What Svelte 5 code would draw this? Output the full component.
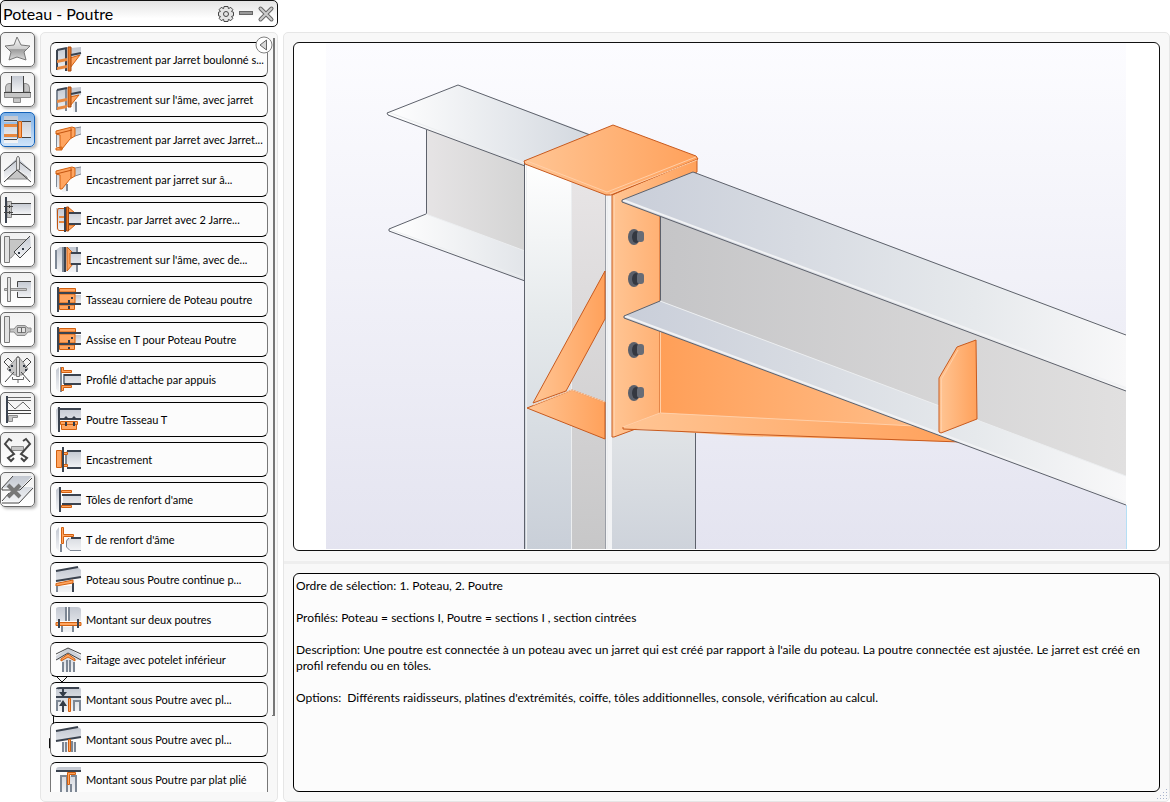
<script lang="ts">
	type Shape = [string, string];

	const categories: { name: string; shapes: Shape[] }[] = [
		{
			name: 'Favoris',
			shapes: [['star', 'M17 5 L21 13 L30 14 L24 20 L26 28 L17 25 L9 28 L11 20 L5 14 L14 13 Z']]
		},
		{
			name: 'Pied de poteau',
			shapes: [
				['grey', 'M5.5 20 V15 Q6 11.5 9 11.5 H11 V20 Z M24 20 V11.5 H26 Q29.5 12 29.5 16 V20 Z'],
				['grey', 'M4.5 20.5 H30.5 V25.5 H4.5 Z M13.5 26 H20.5 V30.5 H13.5 Z'],
				['steel', 'M11 4 H24 V20 H11 Z'],
				['dark1', 'M11.5 4 V20 M23.5 4 V20 M4 20.5 H31']
			]
		},
		{
			name: 'Poteau - Poutre',
			shapes: [
				['steel', 'M4 4 H18 V10 H4 Z M4 15 H18 V22 H4 Z M4 26 H18 V31 H4 Z M22 9 H31 V25 H22 Z'],
				['dark1', 'M4 8.5 H17 M4 27.5 H17 M22 9.5 H31 M22 25.5 H31'],
				['bar-orange', 'M4 12 H18 V15 H4 Z M4 22 H18 V25 H4 Z'],
				['orange', 'M18.5 9.5 H21.5 V25.5 H18.5 Z'],
				['thin', 'M17.5 9 V27']
			]
		},
		{
			name: 'Faîtage',
			shapes: [
				['grey', 'M9 25 L17 18 L27 25 V27 H7 Z'],
				['steel', 'M4 18 L16 7 H19 L31 18 V27 L18 17 L4 27 Z'],
				['dark1', 'M4 19 L17 8 L31 19 M4 30 L17 18 L31 30'],
				['plate', 'M16.5 6 L18 4 L19.500 6 V18 H16.5 Z']
			]
		},
		{
			name: 'Poutre - Poutre',
			shapes: [
				['grey', 'M7 9.5 H11.5 V25.5 H7 Z'],
				['steel', 'M12 11 H31 V22 H12 Z'],
				['dark', 'M6 5 V31'],
				['dark1', 'M11 11.5 H31 M11 22.5 H31 M4 14.5 H13 M4 20.5 H13 M9.5 13 V16 M9.5 19 V22']
			]
		},
		{
			name: 'Contreventement',
			shapes: [
				['grey', 'M9.5 7.5 H27 L11 26 H9.5 Z'],
				['plate', 'M4.5 4.5 H9.5 V30.5 H4.5 Z'],
				['steel', 'M14 20 L30 4 L31 15 L20 26 Z'],
				['dark1', 'M14 20 L30 4 M14 20 L20 26 L31 15'],
				['dot', 'M18 20 h2 v2 h-2 Z M22 16 h2 v2 h-2 Z']
			]
		},
		{
			name: 'Éclissage',
			shapes: [
				['steel', 'M17 9 H31 V26 H17 Z'],
				['dark1', 'M31 9.5 H17.5 V15 M31 25.5 H17.5 V20'],
				['grey', 'M4.5 16.5 H26.5 V18.5 H4.5 Z'],
				['plate', 'M7.5 5.5 H10.5 V29.5 H7.5 Z']
			]
		},
		{
			name: 'Tubes',
			shapes: [
				['plate', 'M4.5 4.5 H9.5 V30.5 H4.5 Z'],
				['grey', 'M10 17 H14 L17 13.5 H25 L28 16 H31 V20 H28 L25 23.5 H17 L14 20 H10 Z'],
				['plate', 'M17.5 15.5 H25.5 V20.5 H17.5 Z'],
				['thin', 'M21.5 16 V21']
			]
		},
		{
			name: 'Gousset',
			shapes: [
				['grey', 'M14 9 L18 4 L22 9 L28 17 L22 23 H14 L7 17 Z'],
				['dark1', 'M4 10 L8 6 L12 10 M31 10 L27 6 L23 10 M14 20 L5 30 M21 20 L30 30 M4 10 L10 16 M31 10 L25 16'],
				['plate', 'M16.5 5.5 H19.5 V24.5 H16.5 Z'],
				['dot', 'M11 13 h2 v2 h-2 Z M23 13 h2 v2 h-2 Z M9 17 h2 v2 h-2 Z M25 17 h2 v2 h-2 Z'],
				['thin', 'M12.5 25 V27.5 H23.5 V25 M18 27 V31']
			]
		},
		{
			name: 'Treillis',
			shapes: [
				['thin', 'M8 5.5 H31 M8 8.5 H31'],
				['thin', 'M8 10 L15 17 L23 10 L30 17'],
				['dark', 'M7 4 V31'],
				['dark1', 'M8 18.5 H31 M8 21.5 H31'],
				['grey', 'M8.5 23.5 H17.5 V25.5 H12.5 V29.5 H8.5 Z']
			]
		},
		{
			name: 'Pannes',
			shapes: [
				['grey', 'M11.5 14.5 H23.5 V18.5 H11.5 Z'],
				['bold', 'M12 9 L9 7 L5 12 L14 22 L8 26 L11 29 L14 26 M23 9 L26 7 L30 12 L21 22 L27 26 L24 29 L21 26']
			]
		},
		{
			name: 'Divers',
			shapes: [
				['steel', 'M2 16 L13 4 H32 L21 16 Z M2 29 L15 15 H33 L20 30 Z'],
				['dark1', 'M2 16 L13 4 M2 16 V18 H20 L32 6 M2 31 H19 L33 16 M2 29 L9 21'],
				['cross', 'M8 13 L20 25 M20 13 L8 25']
			]
		}
	];

	const connections: { label: string; shapes: Shape[] }[] = [
		{
			label: 'Encastrement par Jarret boulonné s...',
			shapes: [
				['steel', 'M2 4 L12 2 V23 L2 25 Z M16 2 L26 1 V9 L16 11 Z'],
				['dark', 'M2 4 V24 M11 3 V25 M2 4 L12 2'],
				['bar-orange', 'M2 14 L12 12 V15 L2 17 Z M2 21 L12 19 V22 L2 24 Z'],
				['orange', 'M15 12 L25 9 L15 22 Z'],
				['deep', 'M13 1 H16 V25 H13 Z'],
				['dark', 'M16 9 L26 7']
			]
		},
		{
			label: "Encastrement sur l'âme, avec jarret",
			shapes: [
				['steel', 'M2 4 L12 2 V23 L2 25 Z M16 2 L26 1 V9 L16 11 Z M18 15 H22 V26 H18 Z'],
				['line', 'M2 4 V24 M11 2 V25 M21 16 V26'],
				['bar-orange', 'M2 14 L12 12 V15 L2 17 Z M2 21 L12 19 V22 L2 24 Z'],
				['orange', 'M15 11 L24 9 L15 20 Z'],
				['deep', 'M13 1 H16 V21 H13 Z'],
				['dark', 'M2 4 L12 2 M16 8 L26 6']
			]
		},
		{
			label: 'Encastrement par Jarret avec Jarret...',
			shapes: [
				['steel', 'M19 3 L26 1 V8 L19 11 Z M1 8 H5 V23 H1 Z'],
				['orange', 'M1 5 L17 1 L20 2 V10 L15 13 L7 23 H5 V9 L1 8 Z M1 22 L7 21 V24 H1 Z'],
				['rust', 'M1 8 L17 4 M16 2 V12'],
				['line1', 'M20 2 L26 1 M20 10 L26 8 M1.5 9 V21']
			]
		},
		{
			label: 'Encastrement par jarret sur â...',
			shapes: [
				['steel', 'M19 3 L26 1 V8 L19 11 Z M1 8 H5 V23 H1 Z M7 18 H13 V26 H7 Z'],
				['orange', 'M1 5 L17 1 L20 2 V10 L15 13 L7 23 H5 V9 L1 8 Z'],
				['rust', 'M1 8 L17 4 M16 2 V12'],
				['line1', 'M20 2 L26 1 M20 10 L26 8 M1.5 9 V21'],
				['line', 'M12 18 V25']
			]
		},
		{
			label: 'Encastr. par Jarret avec 2 Jarre...',
			shapes: [
				['steel', 'M1 2 H9 V24 H1 Z M13 8 H26 V18 H13 Z'],
				['rust', 'M9 2.5 H4 Q2.5 2 2.5 5 V22 Q2.5 24 4 24.5 H9'],
				['bar-orange', 'M4 10 H9 V12 H4 Z M4 15 H9 V17 H4 Z'],
				['orange', 'M13 1 L20 7 H13 Z M13 19 H20 L13 25 Z'],
				['dark', 'M10 1 V26 M14 7 H26 M14 18 H26'],
				['deep', 'M11.5 1 H13.5 V25 H11.5 Z']
			]
		},
		{
			label: "Encastrement sur l'âme, avec de...",
			shapes: [
				['steel', 'M1 4 L5 1 H23 V26 H4 L1 23 Z M15 8 H26 V18 H15 Z'],
				['line', 'M8 1 V26 M1 4 V23 M22 1 V7 M22 19 V26'],
				['orange', 'M12 1 L18 7 H15 V18 H18 L12 25 Z'],
				['dark', 'M10 1 V26 M16 7 H26 M16 18 H26']
			]
		},
		{
			label: 'Tasseau corniere de Poteau poutre',
			shapes: [
				['steel', 'M20 9 H26 V18 H20 Z'],
				['orange', 'M4.5 2.5 H20.5 V6 H4.5 Z M4.5 8 H20 V17 H4.5 Z M4.5 19 H19.5 V23.5 H4.5 Z'],
				['dark', 'M3 1 V26 M3 7 H26 M3 18 H26'],
				['dot', 'M16 11 h2 v2 h-2 Z M13 14 h2 v3 h-2 Z M13 20 h2 v3 h-2 Z']
			]
		},
		{
			label: 'Assise en T pour Poteau Poutre',
			shapes: [
				['steel', 'M20 9 H26 V18 H20 Z'],
				['orange', 'M4.5 2.5 H20.5 V6 H4.5 Z M4.5 8 H20 V17 H4.5 Z M4.5 19 H19.5 V23.5 H4.5 Z'],
				['dark', 'M3 1 V26 M3 7 H26 M3 18 H26'],
				['dot', 'M16 11 h2 v2 h-2 Z M13 14 h2 v3 h-2 Z M13 21 h2 v2 h-2 Z']
			]
		},
		{
			label: "Profilé d'attache par appuis",
			shapes: [
				['steel', 'M1 4 L4 1 V26 L1 23 Z M9 8 H26 V18 H9 Z'],
				['line', 'M6 1 V26 M9 8 V18'],
				['orange', 'M6.5 1.5 H8.5 V4.5 H16.5 V6.5 H6.5 Z M6.5 19.5 H16.5 V21.5 H8.5 V24.5 H6.5 Z'],
				['dark', 'M9 9 H26 M9 18 H26']
			]
		},
		{
			label: 'Poutre Tasseau T',
			shapes: [
				['steel', 'M5 4 H26 V13 H5 Z M1 4 L3 1 V25 L1 23 Z'],
				['dark', 'M4 1 V26 M5 3 H26 M5 13 H26'],
				['orange', 'M5.5 15.5 H22.5 V18.5 H5.5 Z M6.5 18.5 H21.5 V23.5 H6.5 Z'],
				['dot', 'M8 13 L11 10 L14 13 Z M16 13 L19 10 L22 13 Z M10 16 h2 v4 h-2 Z M18 16 h2 v4 h-2 Z']
			]
		},
		{
			label: 'Encastrement',
			shapes: [
				['steel', 'M11 5 H26 V22 H11 Z'],
				['orange', 'M1.5 4.5 H6.5 V21.5 H1.5 Z M8.5 6.5 H12.5 V8.5 H8.5 Z M8.5 18.5 H12.5 V20.5 H8.5 Z'],
				['dark', 'M8 1 V26 M12 5 H26 M12 22 H26'],
				['line', 'M11 9 V18']
			]
		},
		{
			label: "Tôles de renfort d'ame",
			shapes: [
				['steel', 'M1 4 L4 1 V25 L1 23 Z M8 8 H26 V18 H8 Z'],
				['dark', 'M5 1 V26 M7 9 H26 M7 18 H26'],
				['orange', 'M6.5 4.5 H16.5 V6.5 H6.5 Z M6.5 19.5 H16.5 V21.5 H6.5 Z']
			]
		},
		{
			label: "T de renfort d'âme",
			shapes: [
				['steel', 'M1 5 L4 1 V25 L1 22 Z M13 12 H26 V25 H16 L11 20 V14 Z'],
				['line', 'M6 18 V26'],
				['line1', 'M26 24.5 H15 L11.5 21 V15 L14 12'],
				['orange', 'M6.5 1.5 H8.5 V8.5 H18.5 V10.5 H8.5 V17.5 H6.5 Z'],
				['dark', 'M16 12 H26']
			]
		},
		{
			label: 'Poteau sous Poutre continue p...',
			shapes: [
				['steel', 'M1 5 L23 1 L26 4 V12 L1 16 Z M3 20 H17 V26 H3 Z'],
				['dark', 'M1 5 L23 1 M1 15 L26 11 M18 17 V26'],
				['orange', 'M1 17.5 L18 14 V17 L1 20 Z'],
				['line', 'M2 20 V26']
			]
		},
		{
			label: 'Montant sur deux poutres',
			shapes: [
				['steel', 'M1 3 Q1 1 4 1 H11 V15 H1 Z M14 1 H22 Q26 1 26 4 V15 H14 Z M7 21 H18 V26 H7 Z'],
				['line', 'M11 1 V15 M14 1 V15 M7 20 V26 M18 20 V26'],
				['orange', 'M1 16.5 H26 V19.5 H1 Z'],
				['dark', 'M4 13 V22 M23 13 V22']
			]
		},
		{
			label: 'Faitage avec potelet inférieur',
			shapes: [
				['steel', 'M1 10 L13 2 L26 10 V14 H1 Z M7 14 H19 V26 H7 Z'],
				['dark1', 'M1 8 L13 2 L26 8 M1 14 L13 7 L26 14'],
				['orange', 'M6 13 L13 8 L20 13 V15 L13 11 L6 15 Z'],
				['line', 'M8 16 V26 M12 14 V26 M15 14 V26 M19 16 V26']
			]
		},
		{
			label: 'Montant sous Poutre avec pl...',
			shapes: [
				['steel', 'M1 4 Q1 1 4 1 H23 Q26 1 26 4 V25 H1 Z'],
				['dark', 'M1 11 H26 M8 2 V7 M8 18 V26 M2 3 Q2 2 5 2 H24'],
				['dot', 'M4 6 H12 L8 11 Z M4 20 H12 L8 14 Z'],
				['line', 'M2 25 V15 H6 M19 25 V15 H26 M25 14 V25'],
				['orange', 'M13.5 12.5 H15.5 V25.5 H13.5 Z']
			]
		},
		{
			label: 'Montant sous Poutre avec pl...',
			shapes: [
				['steel', 'M1 5 L23 1 L26 3 V11 L1 15 Z M7 16 H20 V26 H7 Z'],
				['dark', 'M1 5 L23 1 M1 15 L26 11'],
				['line', 'M8 16 V26 M11 16 V26 M17 15 V26 M20 16 V26'],
				['orange', 'M13.5 13.5 H15.5 V25.5 H13.5 Z']
			]
		},
		{
			label: 'Montant sous Poutre par plat plié',
			shapes: [
				['steel', 'M1 4 Q1 1 4 1 H26 V5 H1 Z M6 10 H21 V26 H6 Z'],
				['dark', 'M1 5 H26'],
				['line', 'M6 26 V10 H12 M16 10 H21 V26 M12 10 V26 M16 18 V26'],
				['orange', 'M12.5 6.5 H20.5 V8.5 H14.5 V18.5 H12.5 Z']
			]
		}
	];

	const bolts = [237, 279, 350, 393];

	const description = [
		'Ordre de sélection: 1. Poteau, 2. Poutre',
		'Profilés: Poteau = sections I, Poutre = sections I , section cintrées',
		"Description: Une poutre est connectée à un poteau avec un jarret qui est créé par rapport à l'aile du poteau. La poutre connectée est ajustée. Le jarret est créé en profil refendu ou en tôles.",
		"Options:  Différents raidisseurs, platines d'extrémités, coiffe, tôles additionnelles, console, vérification au calcul."
	];

	let activeCategory = $state(2);
	let selected = $state(0);
</script>

{#snippet shapeList(shapes: Shape[])}
	{#each shapes as [kind, d]}
		<path class={kind} {d} />
	{/each}
{/snippet}

<svg class="defs" width="0" height="0" aria-hidden="true">
	<defs>
		<linearGradient id="steel" x1="0" y1="0" x2="0" y2="1">
			<stop offset="0" stop-color="#c3c8d1" />
			<stop offset="1" stop-color="#f3f4f6" />
		</linearGradient>
		<linearGradient id="metal" x1="0" y1="0" x2="0" y2="1">
			<stop offset="0" stop-color="#fafafa" />
			<stop offset="0.5" stop-color="#cfcfcf" />
			<stop offset="0.55" stop-color="#9c9c9c" />
			<stop offset="1" stop-color="#dcdcdc" />
		</linearGradient>
	</defs>
</svg>

<div class="window">
	<div class="left">
		<header class="titlebar">
			<h1>Poteau - Poutre</h1>
			<button aria-label="Paramètres">
				<svg width="18" height="18" viewBox="0 0 18 18">
					<path
						class="gear"
						d="M7 1.5 H11 L11.4 3.6 L13.8 2.4 L15.8 4.6 L14.6 6.6 L16.5 7.2 V10.8 L14.6 11.4 L15.8 13.4 L13.8 15.6 L11.4 14.4 L11 16.5 H7 L6.6 14.4 L4.2 15.6 L2.2 13.4 L3.4 11.4 L1.5 10.8 V7.2 L3.4 6.6 L2.2 4.6 L4.2 2.4 L6.6 3.6 Z"
					/>
					<circle class="gear" cx="9" cy="9" r="2.5" />
				</svg>
			</button>
			<button aria-label="Réduire">
				<svg width="18" height="18" viewBox="0 0 18 18">
					<rect class="bar" x="2.5" y="6.5" width="13" height="3" />
				</svg>
			</button>
			<button aria-label="Fermer">
				<svg width="18" height="18" viewBox="0 0 18 18">
					<path class="x-out" d="M3.5 3.5 L14.5 14.5 M14.5 3.5 L3.5 14.5" />
					<path class="x-in" d="M3.5 3.5 L14.5 14.5 M14.5 3.5 L3.5 14.5" />
				</svg>
			</button>
		</header>

		<div class="browser">
			<nav class="categories">
				{#each categories as category, i}
					<button
						class="category"
						class:active={i === activeCategory}
						aria-label={category.name}
						onclick={() => (activeCategory = i)}
					>
						<svg width="35" height="35" viewBox="0 0 35 35">
							{@render shapeList(category.shapes)}
						</svg>
					</button>
				{/each}
			</nav>

			<section class="panel list">
				<svg class="pointer" width="22" height="76" viewBox="0 0 22 76">
					<path d="M8 3 L14 9 L20 3 M5.5 42 V51 M5 65.5 H1.5 V75 H5" />
				</svg>
				<div class="rows">
					{#each connections as connection, i}
						<button class="row" onclick={() => (selected = i)}>
							<svg width="27" height="27" viewBox="0 0 27 27">
								{@render shapeList(connection.shapes)}
							</svg>
							<span>{connection.label}</span>
						</button>
					{/each}
				</div>
				<button class="collapse" aria-label="Replier">
					<svg width="18" height="18" viewBox="0 0 18 18">
						<circle cx="9" cy="9" r="8" />
						<path d="M11.5 4 V14 L5 9 Z" />
					</svg>
				</button>
				<div class="rail"></div>
			</section>
		</div>
	</div>

	<main class="panel detail">
		<div class="preview">
			<svg viewBox="294 43 865 507" role="img" aria-label="Encastrement par jarret boulonné">
				<defs>
					<linearGradient id="sky" x1="0" y1="0" x2="0" y2="1">
						<stop offset="0" stop-color="#fcfcff" />
						<stop offset="1" stop-color="#e4e4f0" />
					</linearGradient>
					<linearGradient id="flangeLeft">
						<stop offset="0" stop-color="#ffffff" />
						<stop offset="1" stop-color="#d3d8df" />
					</linearGradient>
					<linearGradient id="footLeft">
						<stop offset="0" stop-color="#ffffff" />
						<stop offset="1" stop-color="#e2e5e9" />
					</linearGradient>
					<linearGradient id="webLeft">
						<stop offset="0" stop-color="#e6e4e5" />
						<stop offset="1" stop-color="#d4d4d4" />
					</linearGradient>
					<linearGradient id="flangeRight">
						<stop offset="0" stop-color="#c9ced9" />
						<stop offset="0.35" stop-color="#d7dbe2" />
						<stop offset="0.7" stop-color="#e6e9ec" />
						<stop offset="1" stop-color="#f8f8f9" />
					</linearGradient>
					<linearGradient id="webRight">
						<stop offset="0" stop-color="#c5c5c7" />
						<stop offset="1" stop-color="#e1e0e0" />
					</linearGradient>
					<linearGradient id="column" x1="0" y1="0" x2="0" y2="1">
						<stop offset="0" stop-color="#ffffff" />
						<stop offset="0.4" stop-color="#e6eaec" />
						<stop offset="1" stop-color="#c9cfd8" />
					</linearGradient>
					<linearGradient id="columnWeb" x1="0" y1="0" x2="0" y2="1">
						<stop offset="0" stop-color="#e8e5e6" />
						<stop offset="1" stop-color="#c7c7c8" />
					</linearGradient>
					<linearGradient id="columnFace" x1="0" y1="0" x2="0" y2="1">
						<stop offset="0" stop-color="#e0e3e6" />
						<stop offset="1" stop-color="#ced3db" />
					</linearGradient>
					<linearGradient id="warm">
						<stop offset="0" stop-color="#ffc594" />
						<stop offset="1" stop-color="#ffa15b" />
					</linearGradient>
					<linearGradient id="warmBack">
						<stop offset="0" stop-color="#ff9f58" />
						<stop offset="1" stop-color="#ffc290" />
					</linearGradient>
				</defs>

				<rect x="326" y="43" width="800" height="506" fill="url(#sky)" />
				<path d="M1126.5 505 V549" stroke="#b5dff5" />

				<!-- beam behind the column -->
				<path d="M426 128 L525 164 V253 L426 214 Z" fill="url(#webLeft)" />
				<path class="edge" d="M426.5 130 V214" />
				<path d="M389 229 L426 214 L525 251 V281 L389 231 Z" fill="url(#footLeft)" />
				<path class="soft" d="M426 214 L525 251 M389 229 L525 278" />
				<path class="edge" d="M426 214 L389 229 V231 L525 281" />
				<path d="M387 113 L458 85 L590 134 L525 166 L388 115 Z" fill="url(#flangeLeft)" />
				<path class="soft" d="M388 112 L525 163" />
				<path class="edge" d="M590 135 L458 85 L387 113 L388 115 L525 166" />

				<!-- column -->
				<rect x="611" y="430" width="85" height="119" fill="url(#columnFace)" />
				<rect x="525" y="160" width="47" height="389" fill="url(#column)" />
				<rect x="571" y="175" width="35" height="374" fill="url(#columnWeb)" />
				<rect x="606" y="190" width="6" height="359" fill="#f2f3f5" />
				<path class="seam" d="M605.5 192 V549" />
				<path class="soft" d="M526.5 163 V549 M607.5 195 V549 M571.5 178 V549" />
				<path class="edge" d="M524.5 162 V549 M695.5 430 V549" />

				<g class="hot">
					<path d="M605 271 V319 L566 391 L533 403 Z" fill="url(#warm)" />
					<path d="M527 408 L572 390 L605 402 V439 Z" fill="url(#warm)" />
					<path class="glow" d="M533 405 L572 390 L605 402" />

					<!-- end plate and cap -->
					<path d="M612 195 L697 159 V172 L660 190 V418 L633 430 L614 437 L612 437 Z" fill="url(#warm)" />
					<path class="glow" d="M614.5 196 V436" />
					<path d="M524 161 L613 125 L696 156 L698 159 L611 195 L606 195 L525 164 Z" fill="url(#warm)" />
					<path class="glow" d="M527 161 L607 192 L696 157 M610 194 L697 160" />
				</g>

				<!-- haunch -->
				<path d="M660 329 L960 442 L915 427 L660 413 Z" fill="url(#warmBack)" />
				<path d="M623 428 L660 413 L915 426 L960 442 L740 436 Z" fill="url(#warm)" />
				<g class="hot">
					<path class="glow" d="M660.5 332 V413 L915 426 M623 427 L660 413" />
					<path d="M960 442 L740 434 L623 429 V427" />
				</g>

				{#each bolts as y}
					<ellipse cx="634" cy={y} rx="6" ry="8" fill="#5b606b" />
					<ellipse cx="636" cy={y} rx="4" ry="6" fill="#343841" />
					<rect x="637" y={y - 6} width="7" height="11" rx="3" fill="#676c76" />
				{/each}

				<!-- connected beam -->
				<path d="M660 214 L1126 390 V477 L660 301 Z" fill="url(#webRight)" />
				<path class="edge" d="M660.5 215 V301" />
				<path d="M624 316 L660 301 L1126 476 V505 L624 318 Z" fill="url(#flangeRight)" />
				<path class="soft" d="M660 301 L1126 476" />
				<path class="lip" d="M625 316 L1126 503" />
				<path class="edge" d="M660 301 L624 316 V318 L1126 505" />
				<path d="M622 200 L693 172 L1126 334 V391 L622 202 Z" fill="url(#flangeRight)" />
				<path class="lip" d="M623 200 L1126 388" />
				<path class="edge" d="M1126 335 L693 172 L622 200 V202 L1126 391" />

				<g class="hot">
					<path d="M939 378 L957 347 L976 340 L977 419 L941 433 L939 432 Z" fill="url(#warm)" />
					<path class="glow" d="M941.5 431 V379 L958 350" />
				</g>
			</svg>
		</div>

		<div class="notes">
			{#each description as line}
				<p>{line}</p>
			{/each}
		</div>

		<svg class="grip" width="12" height="12" viewBox="0 0 12 12" aria-hidden="true">
			<path d="M10 1h1v1h-1z M7 4h1v1h-1z M10 4h1v1h-1z M4 7h1v1h-1z M7 7h1v1h-1z M10 7h1v1h-1z M1 10h1v1h-1z M4 10h1v1h-1z M7 10h1v1h-1z M10 10h1v1h-1z" />
		</svg>
	</main>
</div>

<style>
	:global(body) {
		margin: 0;
		background: #fff;
	}

	.window {
		display: flex;
		gap: 5px;
		height: 100vh;
		font-family: Lato, 'Noto Sans', sans-serif;
		color: #000;
	}

	button {
		padding: 0;
		font: inherit;
		color: inherit;
		cursor: pointer;
	}

	svg {
		display: block;
		flex: none;
	}

	.defs {
		position: absolute;
	}

	.left {
		display: flex;
		flex-direction: column;
		gap: 5px;
		flex: none;
		width: 278px;
	}

	.titlebar {
		display: flex;
		align-items: center;
		gap: 2px;
		box-sizing: border-box;
		height: 27px;
		padding: 0 2px;
		border: 1px solid #111;
		border-radius: 5px;
		background: linear-gradient(#e4e4e4, #fff 70%);
	}

	.titlebar h1 {
		flex: 1;
		margin: 0;
		font-size: 16px;
		line-height: 24px;
		font-weight: 400;
	}

	.titlebar button {
		border: 0;
		background: none;
	}

	.browser {
		display: flex;
		flex: 1;
		gap: 5px;
		min-height: 0;
	}

	.categories {
		display: flex;
		flex-direction: column;
		gap: 5px;
		flex: none;
	}

	.category {
		box-sizing: border-box;
		width: 35px;
		height: 35px;
		border: 1px solid #6a6a6a;
		border-radius: 5px;
		background: linear-gradient(#f1f1f1, #fff);
		box-shadow: 2px 2px 3px #bbb;
	}

	.category svg {
		margin: -1px;
	}

	.category.active {
		border-color: #1462b8;
		background: linear-gradient(#7fb1e6, #cfe4fa);
	}

	.panel {
		position: relative;
		box-sizing: border-box;
		border: 1px solid #e6e6e6;
		border-radius: 5px;
		background: #f8f8f8;
	}

	.list {
		flex: 1;
		min-width: 0;
		padding: 9px;
	}

	.rows {
		position: relative;
		display: flex;
		flex-direction: column;
		gap: 5px;
		height: 100%;
		overflow: hidden;
	}

	.row {
		display: flex;
		align-items: center;
		gap: 4px;
		flex: none;
		box-sizing: border-box;
		height: 35px;
		padding: 0 0 0 4px;
		border: 1px solid #000;
		border-left-color: #777;
		border-right-color: #777;
		border-radius: 6px;
		background: #fcfcfc;
		font-size: 11px;
		line-height: 16px;
		text-align: left;
		white-space: nowrap;
	}

	.collapse {
		position: absolute;
		top: 3px;
		right: 4px;
		border: 0;
		background: none;
	}

	.collapse circle {
		fill: #fff;
		stroke: #808080;
	}

	.collapse path {
		fill: #d8d8d8;
		stroke: #666;
	}

	.rail {
		position: absolute;
		top: 5px;
		right: 2px;
		bottom: 85px;
		width: 3px;
		border-right: 2px solid #777;
		border-bottom: 1px solid #777;
		box-sizing: border-box;
	}

	.pointer {
		position: absolute;
		left: 7px;
		bottom: 52px;
		pointer-events: none;
	}

	.pointer path {
		fill: none;
		stroke: #111;
	}

	.detail {
		display: flex;
		flex-direction: column;
		gap: 22px;
		flex: 1;
		min-width: 0;
		margin-top: 32px;
		padding: 9px;
	}

	.preview {
		flex: 7 7 509px;
		min-height: 0;
		box-sizing: border-box;
		border: 1px solid #111;
		border-radius: 6px;
		background: #fff;
		overflow: hidden;
	}

	.preview svg {
		width: 100%;
		height: 100%;
	}

	.notes {
		position: relative;
		flex: 3 3 219px;
		min-height: 0;
		box-sizing: border-box;
		padding: 4px 2px;
		border: 1px solid #000;
		border-radius: 6px;
		background: #fcfcfc;
		font-size: 12px;
		line-height: 16px;
		white-space: pre-wrap;
	}

	.notes::before {
		content: '';
		position: absolute;
		left: -10px;
		right: -10px;
		top: -13px;
		height: 3px;
		background: #eee;
	}

	.notes p {
		margin: 0 0 16px;
	}

	.grip {
		position: absolute;
		right: 1px;
		bottom: 1px;
	}

	.grip path {
		fill: #a9b4cc;
	}

	.gear {
		fill: #e4e4e4;
		stroke: #444;
	}

	.bar {
		fill: #999;
		stroke: #666;
	}

	.x-out {
		stroke: #666;
		stroke-width: 4;
		stroke-linecap: round;
	}

	.x-in {
		stroke: #ccc;
		stroke-width: 2;
		stroke-linecap: round;
	}

	.star {
		fill: url(#metal);
		stroke: #777;
		stroke-linejoin: round;
	}

	.steel {
		fill: url(#steel);
	}

	.grey {
		fill: #c6c6c6;
		stroke: #8c8c8c;
	}

	.plate {
		fill: #e2e2e2;
		stroke: #777;
	}

	.orange {
		fill: #ffa560;
		stroke: #d2600f;
	}

	.bar-orange {
		fill: #e8883f;
	}

	.deep {
		fill: #e57a28;
		stroke: #a9480c;
	}

	.rust {
		fill: none;
		stroke: #c4540f;
	}

	.dark {
		fill: none;
		stroke: #3b434f;
		stroke-width: 2;
	}

	.dark1 {
		fill: none;
		stroke: #444;
	}

	.bold {
		fill: none;
		stroke: #444;
		stroke-width: 2;
	}

	.cross {
		fill: none;
		stroke: #777;
		stroke-width: 4;
	}

	.thin {
		fill: none;
		stroke: #666;
	}

	.line {
		fill: none;
		stroke: #7d8794;
		stroke-width: 2;
	}

	.line1 {
		fill: none;
		stroke: #7d8794;
	}

	.dot {
		fill: #333b46;
	}

	.edge {
		fill: none;
		stroke: #5d616b;
	}

	.seam {
		stroke: #9a9ea6;
	}

	.soft {
		fill: none;
		stroke: #eceef0;
	}

	.lip {
		fill: none;
		stroke: #f1f2f4;
		stroke-width: 2;
	}

	.hot {
		fill: none;
		stroke: #c85a1e;
	}

	.hot .glow {
		stroke: #ffcfa8;
	}
</style>
